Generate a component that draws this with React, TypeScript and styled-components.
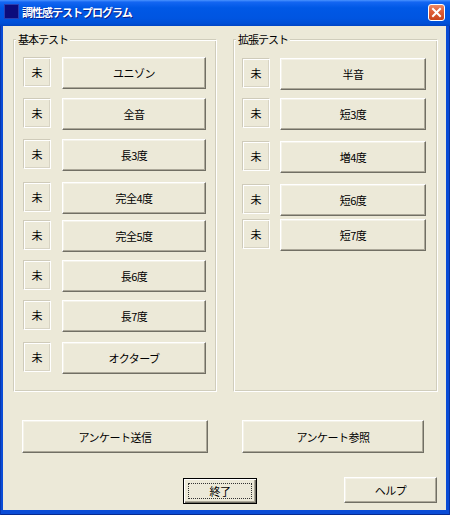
import React from 'react'
import styled, { createGlobalStyle } from 'styled-components'

const GlobalStyle = createGlobalStyle`
  html, body {
    margin: 0;
    padding: 0;
    background: #ffffff;
  }
  body {
    font-family: "Noto Sans CJK JP", "Noto Sans", sans-serif;
  }
`

const Window = styled.div`
  width: 450px;
  height: 515px;
  display: flex;
  flex-direction: column;
  overflow: hidden;
`

const TitleBar = styled.div`
  height: 26px;
  flex: none;
  box-sizing: border-box;
  display: flex;
  align-items: flex-start;
  padding: 4px 5px 0 4px;
  background: linear-gradient(
    to bottom,
    #4b93ff 0%,
    #1466f2 8%,
    #0058e6 30%,
    #0055e1 70%,
    #004fd6 90%,
    #0044c4 100%
  );
`

const AppIcon = styled.div`
  width: 15px;
  height: 15px;
  box-sizing: border-box;
  background: #0c0c7c;
  border: 1px solid #2a3fb0;
  flex: none;
`

const Title = styled.span`
  margin-left: 3px;
  color: #ffffff;
  font-weight: bold;
  font-size: 11px;
  line-height: 17px;
  letter-spacing: -1px;
  text-shadow: 1px 1px 0 #0a1d8a;
  flex: 1;
`

const CloseButton = styled.div`
  width: 17px;
  height: 17px;
  box-sizing: border-box;
  border: 1px solid #ffffff;
  border-radius: 3px;
  background: linear-gradient(to bottom, #ee8a64 0%, #e0603a 40%, #c9441c 100%);
  display: flex;
  align-items: center;
  justify-content: center;
  flex: none;
`

const Frame = styled.div`
  flex: 1;
  display: flex;
  padding: 0 4px 5px 3px;
  background: #0a4cd6;
  box-shadow: inset 1px 0 0 #0838b0, inset -1px 0 0 #0831a0, inset 0 -1px 0 #062a90;
`

const Body = styled.div`
  flex: 1;
  display: flex;
  flex-direction: column;
  background: #ece9d8;
  font-size: 11px;
  color: #000000;
`

const GroupsRow = styled.div`
  display: flex;
  gap: 16px;
  margin-top: 13px;
  padding-left: 10px;
`

const Group = styled.div<{ $width: number; $padLeft: number; $padRight: number }>`
  position: relative;
  width: ${p => p.$width}px;
  height: 353px;
  box-sizing: border-box;
  padding: 17px ${p => p.$padRight}px 0 ${p => p.$padLeft}px;
  border: 1px solid;
  border-color: #d0cdbc #ffffff #ffffff #d0cdbc;
  box-shadow: inset 1px 1px 0 #ffffff, inset -1px -1px 0 #d0cdbc;
  display: flex;
  flex-direction: column;
`

const Caption = styled.span`
  position: absolute;
  top: -8px;
  left: 2px;
  padding: 0 2px;
  background: #ece9d8;
  line-height: 14px;
  letter-spacing: -1px;
`

const Row = styled.div<{ $gap: number; $spacing: number }>`
  display: flex;
  align-items: flex-start;
  gap: ${p => p.$spacing}px;
  margin-top: ${p => p.$gap}px;
`

const Status = styled.div`
  width: 28px;
  height: 30px;
  box-sizing: border-box;
  flex: none;
  border: 1px solid;
  border-color: #cfcbba #ffffff #ffffff #cfcbba;
  box-shadow: inset 1px 1px 0 #ffffff, inset -1px -1px 0 #d8d4c4;
  display: flex;
  align-items: center;
  justify-content: center;
`

const Button = styled.button<{ $w?: number; $h?: number }>`
  ${p => (p.$w ? `width: ${p.$w}px; flex: none;` : 'flex: 1;')}
  height: ${p => p.$h ?? 32}px;
  box-sizing: border-box;
  margin: 0;
  padding: 0;
  background: #ece9d8;
  font-family: inherit;
  font-size: 11px;
  letter-spacing: -0.5px;
  color: #000000;
  border: 1px solid;
  border-color: #ffffff #716f64 #716f64 #ffffff;
  box-shadow: inset -1px -1px 0 #aca899, inset 1px 1px 0 #f4f2e8;
  display: flex;
  align-items: center;
  justify-content: center;
`

const DefaultButton = styled(Button)`
  border: 1px solid #000000;
  box-shadow: inset 1px 1px 0 #ffffff, inset -1px -1px 0 #716f64, inset -2px -2px 0 #aca899;
  padding: 4px;
`

const FocusRing = styled.span`
  flex: 1;
  align-self: stretch;
  display: flex;
  align-items: center;
  justify-content: center;
  border: 1px dotted #333333;
`

const SurveyRow = styled.div`
  display: flex;
  gap: 34px;
  margin-top: 28px;
  padding-left: 19px;
`

const FooterRow = styled.div`
  display: flex;
  align-items: flex-end;
  gap: 87px;
  margin-top: 24px;
  padding-left: 180px;
`

type Test = { label: string; gap: number }

const basicTests: Test[] = [
  { label: 'ユニゾン', gap: 0 },
  { label: '全音', gap: 9 },
  { label: '長3度', gap: 9 },
  { label: '完全4度', gap: 11 },
  { label: '完全5度', gap: 6 },
  { label: '長6度', gap: 8 },
  { label: '長7度', gap: 8 },
  { label: 'オクターブ', gap: 10 },
]

const extendedTests: Test[] = [
  { label: '半音', gap: 1 },
  { label: '短3度', gap: 8 },
  { label: '増4度', gap: 11 },
  { label: '短6度', gap: 11 },
  { label: '短7度', gap: 3 },
]

function TestGroup({
  title,
  width,
  padLeft,
  padRight,
  spacing,
  tests,
}: {
  title: string
  width: number
  padLeft: number
  padRight: number
  spacing: number
  tests: Test[]
}) {
  return (
    <Group $width={width} $padLeft={padLeft} $padRight={padRight}>
      <Caption>{title}</Caption>
      {tests.map(t => (
        <Row key={t.label} $gap={t.gap} $spacing={spacing}>
          <Status>未</Status>
          <Button>{t.label}</Button>
        </Row>
      ))}
    </Group>
  )
}

export default function App() {
  return (
    <>
      <GlobalStyle />
      <Window>
        <TitleBar>
          <AppIcon />
          <Title>調性感テストプログラム</Title>
          <CloseButton>
            <svg width="11" height="11" viewBox="0 0 11 11">
              <path d="M2 2 L9 9 M9 2 L2 9" stroke="#ffffff" strokeWidth="2" strokeLinecap="square" />
            </svg>
          </CloseButton>
        </TitleBar>
        <Frame>
          <Body>
            <GroupsRow>
              <TestGroup title="基本テスト" width={204} padLeft={9} padRight={10} spacing={11} tests={basicTests} />
              <TestGroup title="拡張テスト" width={205} padLeft={8} padRight={11} spacing={10} tests={extendedTests} />
            </GroupsRow>
            <SurveyRow>
              <Button $w={186} $h={33}>アンケート送信</Button>
              <Button $w={182} $h={33}>アンケート参照</Button>
            </SurveyRow>
            <FooterRow>
              <DefaultButton $w={74} $h={26}>
                <FocusRing>終了</FocusRing>
              </DefaultButton>
              <Button $w={93} $h={26} style={{ marginBottom: 1 }}>ヘルプ</Button>
            </FooterRow>
          </Body>
        </Frame>
      </Window>
    </>
  )
}
